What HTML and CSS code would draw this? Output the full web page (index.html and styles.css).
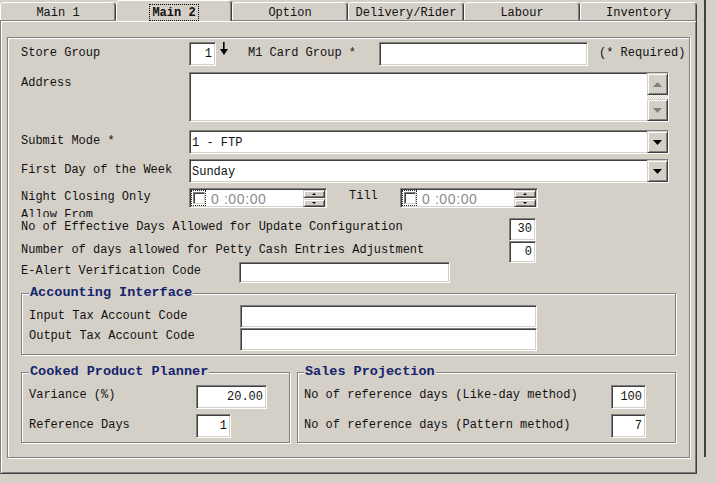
FILE: index.html
```html
<!DOCTYPE html>
<html>
<head>
<meta charset="utf-8">
<link rel="stylesheet" href="styles.css">
</head>
<body>
<div class="app">
  <div class="tabctl">
    <div class="tabs">
      <div class="tab">Main 1</div>
      <div class="tab active"><span class="focus">Main 2</span></div>
      <div class="tab">Option</div>
      <div class="tab">Delivery/Rider</div>
      <div class="tab">Labour</div>
      <div class="tab last">Inventory</div>
    </div>
    <div class="page">
      <div class="inner">
        <div class="row r1">
          <span class="lbl w168 pt4">Store Group</span>
          <div class="tb num w26 h24">1</div>
          <svg class="darrow" width="8" height="13" viewBox="0 0 8 13"><rect x="3" y="0" width="1.6" height="9" fill="#000"/><polygon points="0,7 8,7 4,13" fill="#000"/></svg>
          <span class="lbl wcard pt4">M1 Card Group *</span>
          <div class="tb w209 h24"></div>
          <span class="lbl req pt4">(* Required)</span>
        </div>

        <div class="row r2">
          <span class="lbl w168 pt4">Address</span>
          <div class="memo">
            <div class="memo-txt"></div>
            <div class="vscroll">
              <div class="btn sbtn"><svg width="9" height="5" viewBox="0 0 9 5"><polygon points="4.5,0 9,5 0,5" fill="#808080"/></svg></div>
              <div class="track"></div>
              <div class="btn sbtn"><svg width="9" height="5" viewBox="0 0 9 5"><polygon points="0,0 9,0 4.5,5" fill="#808080"/></svg></div>
            </div>
          </div>
        </div>

        <div class="row r3">
          <span class="lbl w168 pt4">Submit Mode *</span>
          <div class="combo">
            <span class="combo-val">1 - FTP</span>
            <div class="btn cbtn"><svg width="9" height="5" viewBox="0 0 9 5"><polygon points="0,0 9,0 4.5,5" fill="#000"/></svg></div>
          </div>
        </div>

        <div class="row r4">
          <span class="lbl w168 pt4">First Day of the Week</span>
          <div class="combo">
            <span class="combo-val">Sunday</span>
            <div class="btn cbtn"><svg width="9" height="5" viewBox="0 0 9 5"><polygon points="0,0 9,0 4.5,5" fill="#000"/></svg></div>
          </div>
        </div>

        <div class="row r5">
          <span class="lbl w168 twoline">Night Closing Only<br>Allow From</span>
          <div class="dtp">
            <div class="cbwrap"><div class="cb"></div></div>
            <span class="dtp-val">0 :00:00</span>
            <div class="spin">
              <div class="btn spbtn"><span class="tup"></span></div>
              <div class="btn spbtn"><span class="tdn"></span></div>
            </div>
          </div>
          <span class="lbl till">Till</span>
          <div class="dtp">
            <div class="cbwrap"><div class="cb"></div></div>
            <span class="dtp-val">0 :00:00</span>
            <div class="spin">
              <div class="btn spbtn"><span class="tup"></span></div>
              <div class="btn spbtn"><span class="tdn"></span></div>
            </div>
          </div>
        </div>

        <div class="row r6">
          <span class="lbl w488 pt2">No of Effective Days Allowed for Update Configuration</span>
          <div class="tb num w26 h23">30</div>
        </div>
        <div class="row r7">
          <span class="lbl w488 pt2">Number of days allowed for Petty Cash Entries Adjustment</span>
          <div class="tb num w26 h22">0</div>
        </div>
        <div class="row r8">
          <span class="lbl w218 pt2">E-Alert Verification Code</span>
          <div class="tb w210 h21"></div>
        </div>

        <div class="group acc">
          <div class="gtitle">Accounting Interface</div>
          <div class="row g1">
            <span class="lbl w210 pt4">Input Tax Account Code</span>
            <div class="tb w297 h23"></div>
          </div>
          <div class="row">
            <span class="lbl w210 pt1">Output Tax Account Code</span>
            <div class="tb w297 h23"></div>
          </div>
        </div>

        <div class="grouprow">
          <div class="group cooked">
            <div class="gtitle">Cooked Product Planner</div>
            <div class="row g2">
              <span class="lbl w167 pt3">Variance (%)</span>
              <div class="tb num w71 h24">20.00</div>
            </div>
            <div class="row g3">
              <span class="lbl w167 pt4">Reference Days</span>
              <div class="tb num w34 h24">1</div>
            </div>
          </div>
          <div class="group sales">
            <div class="gtitle">Sales Projection</div>
            <div class="row g2">
              <span class="lbl w307 pt3">No of reference days (Like-day method)</span>
              <div class="tb num w34 h24">100</div>
            </div>
            <div class="row g3">
              <span class="lbl w307 pt4">No of reference days (Pattern method)</span>
              <div class="tb num w34 h24">7</div>
            </div>
          </div>
        </div>
      </div>
    </div>
  </div>
  <div class="side"></div>
</div>
</body>
</html>
```

FILE: styles.css
```css
html, body {
  margin: 0;
  padding: 0;
}
body {
  background: #d4d0c8;
  font-family: "Liberation Mono", "Courier New", monospace;
  font-size: 12px;
  line-height: 14px;
  color: #111;
  width: 716px;
  height: 483px;
  overflow: hidden;
}
.app {
  display: flex;
  align-items: flex-start;
}
.tabctl {
  width: 697px;
  flex: none;
}
.side {
  flex: none;
  width: 2px;
  height: 457px;
  margin-left: 7px;
  background: #404040;
}

/* tabs */
.tabs {
  display: flex;
  align-items: flex-end;
  height: 20px;
  position: relative;
  z-index: 1;
}
.tab {
  box-sizing: border-box;
  width: 116px;
  height: 18px;
  border: 1px solid;
  border-bottom: none;
  border-color: #fff #404040 transparent #fff;
  border-radius: 4px 4px 0 0;
  box-shadow: inset -1px 0 #808080;
  text-align: center;
  line-height: 14px;
  padding-top: 3px;
  background: #d4d0c8;
  white-space: nowrap;
}
.tab.last {
  width: 117px;
}
.tab.active {
  height: 21px;
  margin-bottom: -1px;
  font-weight: bold;
  padding-top: 3px;
  line-height: 14px;
}
.focus {
  display: inline-block;
  border: 1px dotted #000;
  padding: 1px 2px 0;
  line-height: 14px;
}

/* page */
.page {
  box-sizing: border-box;
  height: 454px;
  border: 1px solid;
  border-color: #808080 #404040 #404040 #808080;
  box-shadow: inset 1px 1px #fff, inset -1px -1px #808080;
  padding: 16px 0 0 6px;
}
.inner {
  box-sizing: border-box;
  width: 683px;
  height: 421px;
  border: 1px solid #808080;
  box-shadow: inset 1px 1px #fff, 1px 1px #fff;
  padding: 4px 0 0 13px;
}

/* rows */
.row {
  display: flex;
  align-items: flex-start;
}
.lbl {
  flex: none;
  white-space: nowrap;
  line-height: 14px;
}
.pt1 { padding-top: 1px; }
.pt2 { padding-top: 2px; }
.pt3 { padding-top: 3px; }
.pt4 { padding-top: 4px; }
.w167 { width: 167px; }
.w168 { width: 168px; }
.w210 { width: 210px; }
.w218 { width: 218px; }
.w307 { width: 307px; }
.w488 { width: 488px; }
.wcard { width: 131px; margin-left: 20px; }
.req { margin-left: 11px; }
.till { width: 51px; margin-left: 22px; padding-top: 1px; }

.r2 { margin-top: 6px; }
.r3 { margin-top: 8px; }
.r4 { margin-top: 5px; }
.r5 { margin-top: 5px; height: 30px; }
.r8 { margin-top: -1px; }

.twoline {
  line-height: 18px;
  height: 29px;
  overflow: hidden;
}

/* text boxes */
.tb {
  flex: none;
  box-sizing: border-box;
  background: #fff;
  border: 1px solid;
  border-color: #808080 #fff #fff #808080;
  box-shadow: inset 1px 1px #404040, inset -1px -1px #d4d0c8;
  padding: 0 3px 0 3px;
}
.num { text-align: right; }
.w26 { width: 27px; }
.w34 { width: 35px; }
.w71 { width: 71px; }
.w209 { width: 209px; }
.w210 { width: 211px; }
.w297 { width: 297px; }
.h21 { height: 21px; line-height: 19px; }
.h22 { height: 22px; line-height: 20px; }
.h23 { height: 23px; line-height: 21px; }
.h24 { height: 24px; line-height: 22px; }

.darrow {
  flex: none;
  margin-left: 4px;
  margin-top: 0;
}

/* raised buttons */
.btn {
  box-sizing: border-box;
  background: #d4d0c8;
  border: 1px solid;
  border-color: #d4d0c8 #404040 #404040 #d4d0c8;
  box-shadow: inset 1px 1px #fff, inset -1px -1px #808080;
  display: flex;
  align-items: center;
  justify-content: center;
}

/* memo */
.memo {
  flex: none;
  box-sizing: border-box;
  display: flex;
  width: 480px;
  height: 50px;
  background: #fff;
  border: 1px solid;
  border-color: #808080 #fff #fff #808080;
  box-shadow: inset 1px 1px #404040, inset -1px -1px #d4d0c8;
}
.memo-txt { flex: 1; }
.vscroll {
  width: 21px;
  display: flex;
  flex-direction: column;
}
.sbtn { height: 22px; }
.track {
  flex: 1;
  background: repeating-conic-gradient(#fff 0 25%, #d4d0c8 0 50%) 0 0 / 2px 2px;
}

/* combo */
.combo {
  flex: none;
  box-sizing: border-box;
  display: flex;
  width: 480px;
  height: 24px;
  background: #fff;
  border: 1px solid;
  border-color: #808080 #fff #fff #808080;
  box-shadow: inset 1px 1px #404040, inset -1px -1px #d4d0c8;
}
.combo-val {
  flex: 1;
  padding-left: 2px;
  line-height: 22px;
  padding-top: 1px;
}
.cbtn { width: 21px; height: 22px; }

/* date time picker */
.dtp {
  flex: none;
  box-sizing: border-box;
  display: flex;
  align-items: center;
  width: 138px;
  height: 20px;
  background: #fff;
  border: 1px solid;
  border-color: #808080 #fff #fff #808080;
  box-shadow: inset 1px 1px #404040, inset -1px -1px #d4d0c8;
}
.cbwrap {
  box-sizing: border-box;
  width: 15px;
  height: 16px;
  margin-left: 1px;
  border: 1px dotted #222;
  display: flex;
  align-items: center;
  justify-content: center;
}
.cb {
  box-sizing: border-box;
  width: 12px;
  height: 12px;
  background: #fff;
  border: 1px solid;
  border-color: #808080 #d4d0c8 #d4d0c8 #808080;
  box-shadow: inset 1px 1px #404040;
}
.dtp-val {
  margin-left: 5px;
  font-family: "Liberation Sans", Arial, sans-serif;
  font-size: 14px;
  letter-spacing: 0.6px;
  color: #8c8c8c;
  padding-top: 2px;
}
.spin {
  margin-left: auto;
  margin-right: 1px;
  width: 22px;
  display: flex;
  flex-direction: column;
  gap: 1px;
}
.spbtn { height: 8px; }
.tup {
  width: 0;
  height: 0;
  border-left: 2px solid transparent;
  border-right: 2px solid transparent;
  border-bottom: 2px solid #000;
}
.tdn {
  width: 0;
  height: 0;
  border-left: 2px solid transparent;
  border-right: 2px solid transparent;
  border-top: 2px solid #000;
}

/* groups */
.group {
  box-sizing: border-box;
  border: 1px solid #808080;
  box-shadow: inset 1px 1px #fff, 1px 1px #fff;
  padding: 0 0 3px 7px;
}
.gtitle {
  display: table;
  margin-top: -9px;
  padding: 0 1px;
  background: #d4d0c8;
  color: #14246e;
  font-weight: bold;
  font-size: 13.5px;
  line-height: 16px;
  white-space: nowrap;
}
.acc {
  width: 655px;
  margin-top: 10px;
}
.g1 { margin-top: 4px; }
.grouprow {
  display: flex;
  gap: 7px;
  margin-top: 17px;
}
.cooked {
  width: 269px;
  padding-bottom: 4px;
}
.sales {
  width: 379px;
  padding-left: 6px;
  padding-bottom: 4px;
}
.g2 { margin-top: 5px; }
.g3 { margin-top: 5px; }
```
